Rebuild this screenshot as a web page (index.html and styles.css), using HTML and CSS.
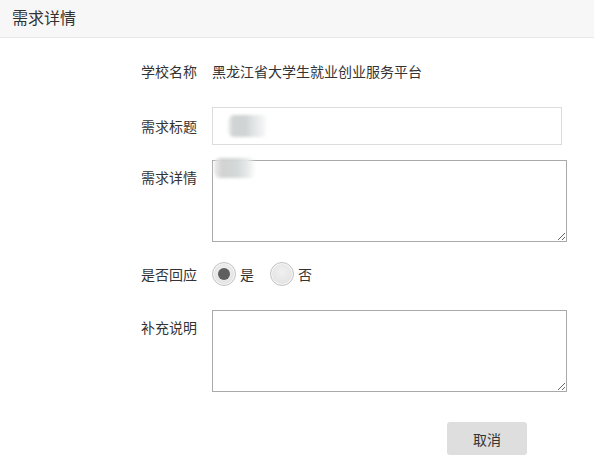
FILE: index.html
```html
<!DOCTYPE html>
<html lang="zh-CN">
<head>
<meta charset="utf-8">
<title>需求详情</title>
<link rel="stylesheet" href="styles.css">
</head>
<body>
<div class="hd">需求详情</div>
<div class="form">
  <div class="row row-school">
    <div class="label">学校名称</div>
    <div class="value">黑龙江省大学生就业创业服务平台</div>
  </div>
  <div class="row row-title">
    <div class="label label-mid">需求标题</div>
    <div class="field">
      <input class="ipt" type="text">
      <span class="blur blur-title"></span>
    </div>
  </div>
  <div class="row row-detail">
    <div class="label label-top">需求详情</div>
    <div class="field">
      <textarea class="ta"></textarea>
      <span class="blur blur-detail"></span>
    </div>
  </div>
  <div class="row row-radio">
    <div class="label label-mid">是否回应</div>
    <div class="radios">
      <span class="radio checked"></span><span class="rtext">是</span>
      <span class="radio"></span><span class="rtext">否</span>
    </div>
  </div>
  <div class="row row-note">
    <div class="label label-top">补充说明</div>
    <div class="field">
      <textarea class="ta"></textarea>
    </div>
  </div>
  <div class="actions">
    <button class="btn" type="button">取消</button>
  </div>
</div>
</body>
</html>
```

FILE: styles.css
```css
* { box-sizing: border-box; }
html, body { margin: 0; padding: 0; background: #fff; }
body {
  font-family: "Noto Sans CJK SC", "Noto Sans", sans-serif;
  color: #333;
  font-size: 14px;
}
.hd {
  height: 38px;
  background: #f7f7f7;
  border-bottom: 1px solid #e9e9e9;
  padding-left: 12px;
  font-size: 16px;
  line-height: 35px;
  color: #333;
}
.form {
  padding-left: 141px;
  padding-top: 22px;
}
.row {
  display: flex;
  align-items: flex-start;
}
.label {
  width: 56px;
  margin-right: 15px;
  line-height: 20px;
  white-space: nowrap;
  flex-shrink: 0;
}
.row-school { line-height: 22px; height: 22px; }
.row-school .label { line-height: 22px; }
.value { line-height: 22px; white-space: nowrap; }
.row-title { margin-top: 25px; align-items: center; }
.row-detail { margin-top: 15px; }
.row-radio { margin-top: 20px; align-items: center; }
.row-note { margin-top: 24px; }
.label-top { padding-top: 7px; }
.field { position: relative; }
.ipt {
  display: block;
  width: 350px;
  height: 38px;
  border: 1px solid #dcdcdc;
  margin: 0;
  padding: 0 10px;
  font: inherit;
  outline: none;
  background: #fff;
}
.ta {
  display: block;
  width: 355px;
  height: 82px;
  border: 1px solid #a9a9a9;
  margin: 0;
  padding: 4px;
  font: inherit;
  outline: none;
  resize: both;
  background: #fff;
}
.blur {
  position: absolute;
  filter: blur(1.5px);
  pointer-events: none;
}
.blur-title {
  left: 16px;
  top: 8px;
  width: 40px;
  height: 22px;
  background: linear-gradient(90deg, #f2f2f2 0, #d2d4d4 12%, #d0d4d5 45%, #dfe2e3 60%, #f0f1f2 85%, rgba(255,255,255,0) 100%);
  border-radius: 6px;
}
.blur-detail {
  left: 2px;
  top: -2px;
  width: 42px;
  height: 20px;
  background: linear-gradient(90deg, #ececec 0, #d2d2d2 20%, #d3d8d8 55%, #e8eaea 80%, rgba(255,255,255,0) 100%);
  border-radius: 6px;
}
.radios {
  display: flex;
  align-items: center;
  height: 24px;
}
.radio {
  width: 24px;
  height: 24px;
  border-radius: 50%;
  border: 1px solid #c4c4c4;
  background: radial-gradient(circle at 50% 40%, #f0f0f0 0, #e4e4e4 70%, #dadada 100%);
  box-shadow: inset 0 0 0 1px #f6f6f6;
  position: relative;
  flex-shrink: 0;
}
.radio.checked::after {
  content: "";
  position: absolute;
  left: 50%;
  top: 50%;
  width: 12px;
  height: 12px;
  margin: -6px 0 0 -6px;
  border-radius: 50%;
  background: #5f5f5f;
}
.rtext {
  margin-left: 4px;
  margin-right: 16px;
  line-height: 20px;
}
.actions {
  margin-top: 30px;
  padding-left: 306px;
}
.btn {
  width: 80px;
  height: 33px;
  border: 0;
  border-radius: 3px;
  background: #dedede;
  color: #333;
  font: inherit;
  font-size: 14px;
  padding: 0;
  cursor: pointer;
}
```
